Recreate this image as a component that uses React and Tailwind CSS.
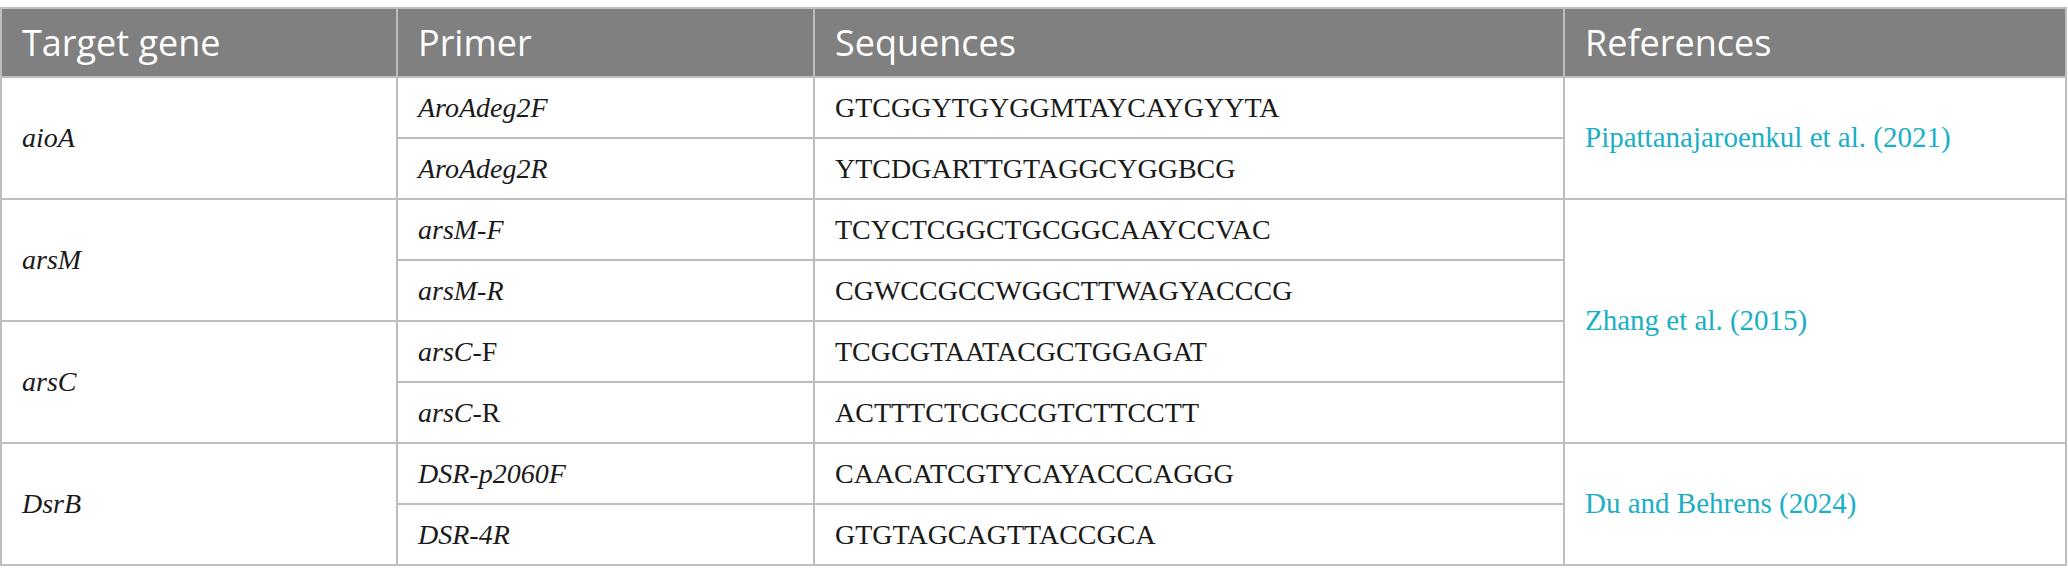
const rows = [
  { gene: "aioA", primers: [["AroAdeg2F", null], ["AroAdeg2R", null]], seqs: ["GTCGGYTGYGGMTAYCAYGYYTA", "YTCDGARTTGTAGGCYGGBCG"], ref: "Pipattanajaroenkul et al. (2021)", refSpan: 2 },
  { gene: "arsM", primers: [["arsM-F", null], ["arsM-R", null]], seqs: ["TCYCTCGGCTGCGGCAAYCCVAC", "CGWCCGCCWGGCTTWAGYACCCG"], ref: "Zhang et al. (2015)", refSpan: 4 },
  { gene: "arsC", primers: [["arsC", "-F"], ["arsC", "-R"]], seqs: ["TCGCGTAATACGCTGGAGAT", "ACTTTCTCGCCGTCTTCCTT"], ref: null },
  { gene: "DsrB", primers: [["DSR-p2060F", null], ["DSR-4R", null]], seqs: ["CAACATCGTYCAYACCCAGGG", "GTGTAGCAGTTACCGCA"], ref: "Du and Behrens (2024)", refSpan: 2 },
];

const cell = "border-2 border-[#bdbdbd] h-[61px] px-5 text-left align-middle";
const head = "border-2 border-[#bdbdbd] h-[69px] px-5 text-left font-normal";

const App = () => {
  return (
    <div className="w-[2068px] h-[586px] bg-white pt-[7px] font-['Liberation_Serif',serif] text-[28px] text-[#1a1a1a]">
      <table className="w-[2067px] border-collapse table-fixed">
        <colgroup>
          <col className="w-[396px]" />
          <col className="w-[417px]" />
          <col className="w-[750px]" />
          <col />
        </colgroup>
        <thead>
          <tr className="bg-[#808080] text-white font-['Open_Sans',sans-serif] text-[36px] leading-none">
            <th className={head}>Target gene</th>
            <th className={head}>Primer</th>
            <th className={head}>Sequences</th>
            <th className={head}>References</th>
          </tr>
        </thead>
        <tbody>
          {rows.map((r) =>
            r.primers.map((p, i) => (
              <tr key={r.gene + i}>
                {i === 0 && (
                  <td rowSpan={2} className={cell + " italic"}>{r.gene}</td>
                )}
                <td className={cell}>
                  <span className="italic">{p[0]}</span>
                  {p[1]}
                </td>
                <td className={cell}>{r.seqs[i]}</td>
                {i === 0 && r.ref && (
                  <td rowSpan={r.refSpan} className={cell + " text-[#1aafc4] text-[29px]"}>{r.ref}</td>
                )}
              </tr>
            ))
          )}
        </tbody>
      </table>
    </div>
  );
};

export default App;
